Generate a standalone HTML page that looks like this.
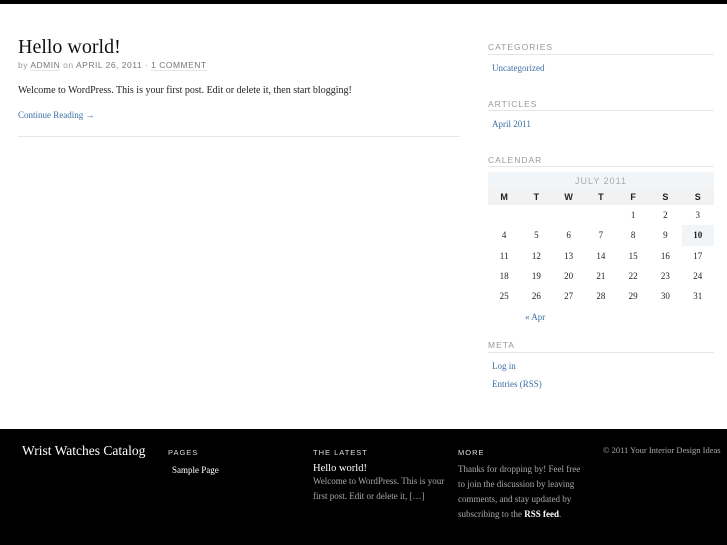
<!DOCTYPE html>
<html><head><meta charset="utf-8"><style>
*{margin:0;padding:0;box-sizing:border-box}
body{width:727px;height:545px;overflow:hidden;background:#fff;font-family:"Liberation Serif",serif;color:#222;position:relative}
.top{position:absolute;left:0;top:0;width:727px;height:4px;background:#000}
.abs{position:absolute;white-space:nowrap}
.sans{font-family:"Liberation Sans",sans-serif}
a{color:#3a6ea5;text-decoration:none}
.h{font-family:"Liberation Sans",sans-serif;font-size:8.5px;letter-spacing:1px;color:#999;}
.line{position:absolute;height:1px;background:#e6e6e6}
table{border-collapse:collapse;position:absolute;left:488px;top:172px;width:226px;font-size:9px;table-layout:fixed}
td,th{text-align:center;height:20.3px;padding:0;width:32.3px}
th{font-family:"Liberation Sans",sans-serif;font-size:9px;background:#f2f2f2;height:16px}
.cap{background:#f1f5f8;color:#aaa;font-family:"Liberation Sans",sans-serif;letter-spacing:1px;font-size:9px;height:17px;font-weight:normal}
.foot{position:absolute;left:0;top:429px;width:727px;height:116px;background:#000;color:#ccc}
.fh{font-family:"Liberation Sans",sans-serif;font-size:7.5px;letter-spacing:1px;color:#ddd}
.ft{font-size:9px;color:#aaa;line-height:15px;white-space:normal}
</style></head><body>
<div class="top"></div>
<div class="abs" style="left:18px;top:36px;font-size:20px;color:#111">Hello world!</div>
<div class="abs sans" style="left:18px;top:60px;font-size:8.5px;color:#999;letter-spacing:.5px">by <span style="border-bottom:1px solid #e6e6e6;color:#777">ADMIN</span> on <span style="color:#777">APRIL 26, 2011</span> · <span style="border-bottom:1px solid #e6e6e6;color:#777">1 COMMENT</span></div>
<div class="abs" style="left:18px;top:85px;font-size:10px">Welcome to WordPress. This is your first post. Edit or delete it, then start blogging!</div>
<div class="abs" style="left:18px;top:110px;font-size:9px"><a>Continue Reading →</a></div>
<div class="line" style="left:18px;top:136px;width:442px"></div>

<div class="abs h" style="left:488px;top:42px">CATEGORIES</div>
<div class="line" style="left:488px;top:54px;width:226px"></div>
<div class="abs" style="left:492px;top:63px;font-size:9px"><a>Uncategorized</a></div>
<div class="abs h" style="left:488px;top:99px">ARTICLES</div>
<div class="line" style="left:488px;top:110px;width:226px"></div>
<div class="abs" style="left:492px;top:119px;font-size:9px"><a>April 2011</a></div>
<div class="abs h" style="left:488px;top:155px">CALENDAR</div>
<div class="line" style="left:488px;top:166px;width:226px"></div>
<table>
<tr><th colspan="7" class="cap">JULY 2011</th></tr>
<tr><th>M</th><th>T</th><th>W</th><th>T</th><th>F</th><th>S</th><th>S</th></tr>
<tr><td></td><td></td><td></td><td></td><td>1</td><td>2</td><td>3</td></tr>
<tr><td>4</td><td>5</td><td>6</td><td>7</td><td>8</td><td>9</td><td style="background:#f1f5f8;font-weight:bold">10</td></tr>
<tr><td>11</td><td>12</td><td>13</td><td>14</td><td>15</td><td>16</td><td>17</td></tr>
<tr><td>18</td><td>19</td><td>20</td><td>21</td><td>22</td><td>23</td><td>24</td></tr>
<tr><td>25</td><td>26</td><td>27</td><td>28</td><td>29</td><td>30</td><td>31</td></tr>
</table>
<div class="abs" style="left:525px;top:312px;font-size:9px"><a>« Apr</a></div>
<div class="abs h" style="left:488px;top:340px">META</div>
<div class="line" style="left:488px;top:352px;width:226px"></div>
<div class="abs" style="left:492px;top:361px;font-size:9px"><a>Log in</a></div>
<div class="abs" style="left:492px;top:379px;font-size:9px"><a>Entries (RSS)</a></div>

<div class="foot">
<div class="abs" style="left:22px;top:14px;font-size:13.5px;color:#fff">Wrist Watches Catalog</div>
<div class="abs fh" style="left:168px;top:19px">PAGES</div>
<div class="abs" style="left:172px;top:36px;font-size:9px;color:#fff">Sample Page</div>
<div class="abs fh" style="left:313px;top:19px">THE LATEST</div>
<div class="abs" style="left:313px;top:34px;font-size:10.5px;color:#fff">Hello world!</div>
<div class="abs ft" style="left:313px;top:45px;width:135px">Welcome to WordPress. This is your first post. Edit or delete it, […]</div>
<div class="abs fh" style="left:458px;top:19px">MORE</div>
<div class="abs ft" style="left:458px;top:33px;width:128px">Thanks for dropping by! Feel free to join the discussion by leaving comments, and stay updated by subscribing to the <b style="color:#fff">RSS feed</b>.</div>
<div class="abs" style="left:603px;top:16px;font-size:8.5px;color:#aaa">© 2011 Your Interior Design Ideas</div>
</div>
</body></html>
